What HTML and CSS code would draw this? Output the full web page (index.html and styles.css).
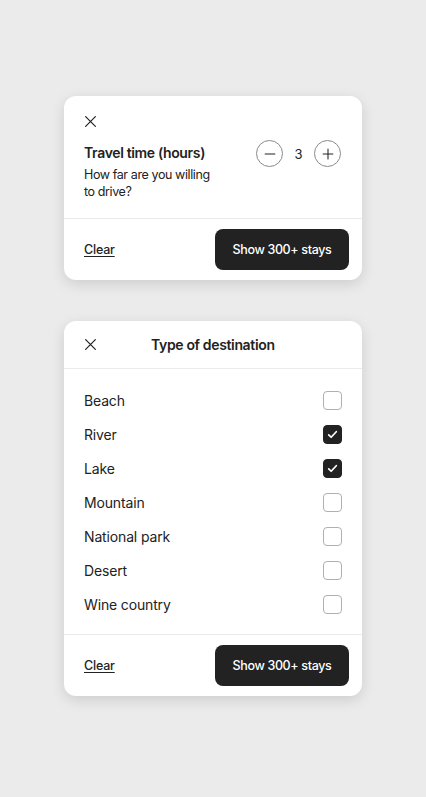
FILE: index.html
```html
<!DOCTYPE html>
<html lang="en">
<head>
<meta charset="utf-8">
<title>Filters</title>
<link rel="stylesheet" href="styles.css">
</head>
<body>
<main class="page">
  <section class="card">
    <div class="travel">
      <button class="close" aria-label="Close">
        <svg viewBox="0 0 32 32" width="13" height="13"><path d="M4 4l24 24M28 4L4 28" fill="none" stroke="#222" stroke-width="3" stroke-linecap="round"/></svg>
      </button>
      <div class="travel-row">
        <div class="travel-text">
          <h2 class="travel-title">Travel time (hours)</h2>
          <p class="travel-sub">How far are you willing<br>to drive?</p>
        </div>
        <div class="stepper">
          <button class="step" aria-label="Decrease">
            <svg viewBox="0 0 32 32" width="12" height="12"><path d="M3 16h26" fill="none" stroke="#222" stroke-width="2.8" stroke-linecap="round"/></svg>
          </button>
          <span class="step-value">3</span>
          <button class="step" aria-label="Increase">
            <svg viewBox="0 0 32 32" width="12" height="12"><path d="M3 16h26M16 3v26" fill="none" stroke="#222" stroke-width="2.8" stroke-linecap="round"/></svg>
          </button>
        </div>
      </div>
    </div>
    <div class="footer">
      <a class="clear" href="#">Clear</a>
      <button class="show">Show 300+ stays</button>
    </div>
  </section>

  <section class="card">
    <header class="head">
      <button class="close" aria-label="Close">
        <svg viewBox="0 0 32 32" width="13" height="13"><path d="M4 4l24 24M28 4L4 28" fill="none" stroke="#222" stroke-width="3" stroke-linecap="round"/></svg>
      </button>
      <h2 class="head-title">Type of destination</h2>
    </header>
    <ul class="list">
      <li class="item"><span>Beach</span><span class="box"></span></li>
      <li class="item"><span>River</span><span class="box checked"><svg viewBox="0 0 32 32" width="11" height="11"><path d="M5 17l7 7L27 8" fill="none" stroke="#fff" stroke-width="5" stroke-linecap="round" stroke-linejoin="round"/></svg></span></li>
      <li class="item"><span>Lake</span><span class="box checked"><svg viewBox="0 0 32 32" width="11" height="11"><path d="M5 17l7 7L27 8" fill="none" stroke="#fff" stroke-width="5" stroke-linecap="round" stroke-linejoin="round"/></svg></span></li>
      <li class="item"><span>Mountain</span><span class="box"></span></li>
      <li class="item"><span>National park</span><span class="box"></span></li>
      <li class="item"><span>Desert</span><span class="box"></span></li>
      <li class="item"><span>Wine country</span><span class="box"></span></li>
    </ul>
    <div class="footer">
      <a class="clear" href="#">Clear</a>
      <button class="show">Show 300+ stays</button>
    </div>
  </section>
</main>
</body>
</html>
```
FILE: styles.css
```css
* { box-sizing: border-box; }
html, body { margin: 0; padding: 0; }
body {
  background: #ebebeb;
  font-family: Inter, "Noto Sans", "Liberation Sans", sans-serif;
  color: #222;
  width: 426px;
  min-height: 797px;
}
button { font-family: inherit; cursor: pointer; }
.page {
  display: flex;
  flex-direction: column;
  align-items: center;
  gap: 41px;
  padding-top: 96px;
}
.card {
  width: 298px;
  background: #fff;
  border-radius: 12px;
  box-shadow: 0 4px 14px rgba(0, 0, 0, 0.13);
  overflow: hidden;
}
.close {
  border: 0;
  background: none;
  padding: 0;
  width: 13px;
  height: 13px;
  display: flex;
}
.travel {
  padding: 19px 20px 0 20px;
  height: 123px;
  border-bottom: 1px solid #ebebeb;
}
.travel-row {
  display: flex;
  justify-content: space-between;
  margin-top: 16px;
}
.travel-title {
  margin: 0;
  font-size: 14px;
  font-weight: 600;
  line-height: 18px;
  letter-spacing: -0.35px;
}
.travel-sub {
  margin: 4px 0 0 0;
  font-size: 12.5px;
  line-height: 17px;
  letter-spacing: -0.4px;
}
.stepper {
  display: flex;
  align-items: center;
  align-self: flex-start;
  margin-top: -4px;
  margin-right: 1px;
}
.step {
  width: 27px;
  height: 27px;
  border-radius: 50%;
  border: 1px solid #8a8a8a;
  background: #fff;
  padding: 0;
  display: flex;
  align-items: center;
  justify-content: center;
}
.step-value {
  width: 31px;
  text-align: center;
  font-size: 13px;
}
.footer {
  height: 61px;
  display: flex;
  align-items: center;
  justify-content: space-between;
  padding: 0 13px 0 20px;
}
.clear {
  color: #222;
  font-size: 12.5px;
  font-weight: 500;
  letter-spacing: -0.2px;
  text-decoration: underline;
  text-underline-offset: 2px;
}
.show {
  width: 134px;
  height: 41px;
  border: 0;
  border-radius: 8px;
  background: #222;
  color: #fff;
  font-size: 12.5px;
  font-weight: 500;
  letter-spacing: -0.35px;
}
.head {
  height: 48px;
  display: flex;
  align-items: center;
  padding: 0 20px;
  border-bottom: 1px solid #ebebeb;
}
.head-title {
  margin: 0 0 0 54px;
  font-size: 14px;
  font-weight: 600;
  letter-spacing: -0.35px;
}
.list {
  list-style: none;
  margin: 0;
  padding: 14px 20px 13px 20px;
  border-bottom: 1px solid #ebebeb;
}
.item {
  height: 34px;
  display: flex;
  align-items: center;
  justify-content: space-between;
  font-size: 14px;
  letter-spacing: -0.15px;
}
.box {
  width: 19px;
  height: 19px;
  border: 1px solid #b0b0b0;
  border-radius: 4px;
  display: flex;
  align-items: center;
  justify-content: center;
}
.box.checked {
  background: #222;
  border-color: #222;
}
```
